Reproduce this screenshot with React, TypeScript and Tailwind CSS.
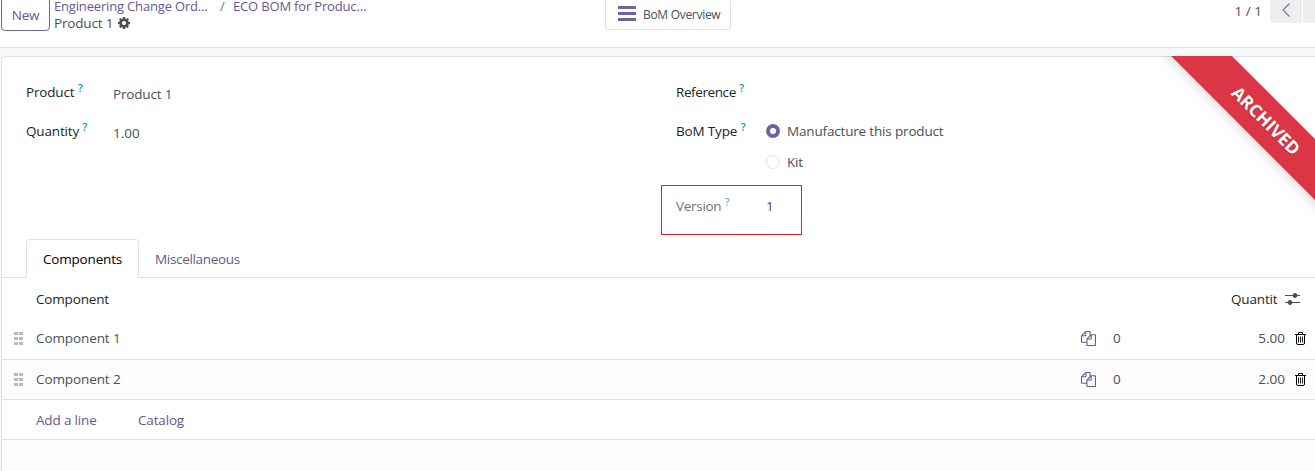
import React from "react";

function CogIcon() {
  return (
    <svg viewBox="0 0 1792 1792" className="size-[14px] fill-[#495057]">
      <path d="M1152 896q0-106-75-181t-181-75-181 75-75 181 75 181 181 75 181-75 75-181zm512-109v222q0 12-8 23t-20 13l-185 28q-19 54-39 91 35 50 107 138 10 12 10 25t-9 23q-27 37-99 108t-94 71q-12 0-26-9l-138-108q-44 23-91 38-16 136-29 186-7 28-36 28h-222q-14 0-24.5-8.5t-11.5-21.5l-28-184q-49-16-90-37l-141 107q-10 9-25 9-14 0-25-11-126-114-165-168-7-10-7-23 0-12 8-23 15-21 51-66.5t54-70.5q-27-50-41-99l-183-27q-13-2-21-12.5t-8-23.5v-222q0-12 8-23t19-13l186-28q14-46 39-92-40-57-107-138-10-12-10-24 0-10 9-23 26-36 98.5-107.5t94.5-71.5q13 0 26 10l138 107q44-23 91-38 16-136 29-186 7-28 36-28h222q14 0 24.5 8.5t11.5 21.5l28 184q49 16 90 37l142-107q9-9 24-9 13 0 25 10 129 119 165 170 7 8 7 22 0 12-8 23-15 21-51 66.5t-54 70.5q26 50 41 98l183 28q13 2 21 12.5t8 23.5z" />
    </svg>
  );
}

function CopyIcon() {
  return (
    <svg viewBox="0 0 1792 1792" className="size-[15px] shrink-0 fill-[#66598f]">
      <path d="M1696 384q40 0 68 28t28 68v1216q0 40-28 68t-68 28h-960q-40 0-68-28t-28-68v-288h-544q-40 0-68-28t-28-68v-672q0-40 20-88t48-76l408-408q28-28 76-48t88-20h416q40 0 68 28t28 68v328q68-40 128-40h416zm-544 213l-299 299h299v-299zm-640-384l-299 299h299v-299zm196 647l316-316v-416h-384v416q0 40-28 68t-68 28h-416v640h512v-256q0-40 20-88t48-76zm956 804v-1152h-384v416q0 40-28 68t-68 28h-416v640h896z" />
    </svg>
  );
}

function TrashIcon() {
  return (
    <svg viewBox="0 0 11 13" className="h-[13px] w-[11px] shrink-0 fill-none stroke-black">
      <path d="M0 2.5h11M3.5 2.5V.5h4v2M1.5 2.5v8.5q0 1.5 1.5 1.5h5q1.500 0 1.500-1.500V2.500" />
      <path d="M3.500 4.500v6M5.500 4.500v6M7.500 4.500v6" strokeWidth="0.900" />
    </svg>
  );
}

function SlidersIcon() {
  return (
    <svg viewBox="0 0 15 13" className="h-[13px] w-[15px] shrink-0 fill-[#495057] stroke-[#495057]">
      <path d="M0 2.500h15M0 9.500h15" strokeWidth="1.100" />
      <circle cx="10" cy="2.500" r="2" />
      <circle cx="5" cy="9.500" r="2" />
    </svg>
  );
}

function Grip() {
  return (
    <span className="grid w-[9px] shrink-0 grid-cols-2 gap-x-px gap-y-[2px]">
      {[0, 1, 2, 3, 4, 5].map((i) => (
        <span key={i} className="h-[3px] w-[4px] bg-[#b5bbc1]" />
      ))}
    </span>
  );
}

function Label({ text, className }: { text: string; className: string }) {
  return (
    <div className={`flex h-5 shrink-0 items-center leading-5 text-[#212529] ${className}`}>
      <span>{text}</span>
      <sup className="-top-1 ml-[3.500px] text-[10.500px] font-semibold text-[#0f8fb3]">?</sup>
    </div>
  );
}

function Row({ name, qty, className }: { name: string; qty: string; className: string }) {
  return (
    <div className={`flex items-center border-b border-[#dee2e6] pl-3 text-[#495057] ${className}`}>
      <Grip />
      <span className="ml-[13px] w-[1045px] shrink-0 tracking-[-0.1px]">{name}</span>
      <CopyIcon />
      <span className="ml-[17px] w-[20px] shrink-0 tracking-normal">0</span>
      <span className="w-[152px] shrink-0 text-right tracking-normal">{qty}</span>
      <span className="ml-[10px] flex">
        <TrashIcon />
      </span>
    </div>
  );
}

export default function App() {
  return (
    <div className="flex h-[471px] w-[1315px] flex-col overflow-hidden bg-[#f8f9fb] font-['Open_Sans',sans-serif] text-[13.500px] tracking-[-0.17px] text-[#495057]">
      <header className="flex h-12 shrink-0 items-start border-b border-[#dee2e6] bg-white">
        <button className="-mt-1 ml-px flex h-[35px] w-[49px] items-center justify-center rounded border border-[#71639e] pb-px text-[#66598f]">
          <span className="pt-1">New</span>
        </button>
        <div className="ml-1 flex w-[551px] shrink-0 flex-col">
          <div className="flex h-[13px] items-center whitespace-nowrap text-[13px] leading-[13px] text-[#66598f]">
            <span className="w-[166px]">Engineering Change Ord...</span>
            <span className="w-[13px] text-[#6c757d]">/</span>
            <span>ECO BOM for Produc...</span>
          </div>
          <div className="mt-[2px] flex h-4 items-center gap-1 leading-4">
            <span>Product 1</span>
            <CogIcon />
          </div>
        </div>
        <button className="-mt-1 flex h-[34px] w-[126px] shrink-0 items-center rounded border border-[#dee2e6] pl-3 text-[12px] tracking-[-0.3px]">
          <span className="flex w-[18px] flex-col gap-[3px]">
            <span className="h-[3px] bg-[#71639e]" />
            <span className="h-[3px] bg-[#71639e]" />
            <span className="h-[3px] bg-[#71639e]" />
          </span>
          <span className="ml-[7px] whitespace-nowrap pt-[3px]">BoM Overview</span>
        </button>
        <div className="ml-auto flex">
          <span className="mr-[8px] mt-px leading-5 tracking-normal">1 / 1</span>
          <span className="flex h-[23px] w-8 justify-center rounded-bl bg-[#eceef0] pt-[3px]">
            <svg viewBox="0 0 8 14" className="h-[14px] w-2 fill-none stroke-[#777b80]">
              <path d="M7.500 .5L1 7l6.500 6.500" strokeWidth="1.200" />
            </svg>
          </span>
          <span className="ml-px h-[23px] w-3 bg-[#eceef0]" />
        </div>
      </header>

      <main className="relative ml-px mt-2 flex h-[415px] flex-col overflow-hidden rounded-tl border-l border-[#dee2e6] bg-white">
        <div className="absolute left-[1112.500px] top-[41.500px] flex h-[43px] w-[300px] rotate-45 items-center justify-center bg-[#dc3545] pl-[3px] text-[17.500px] font-bold tracking-normal text-white shadow-[0_5px_10px_rgba(0,0,0,0.1)] [text-shadow:0_1px_1px_rgba(0,0,0,0.2)]">
          ARCHIVED
        </div>

        <div className="flex h-[183px] shrink-0 rounded-tl border-t border-[#dee2e6]">
          <div className="flex w-[659px] flex-col pl-6 pt-[25px]">
            <div className="flex h-[39px]">
              <Label text="Product" className="w-[87px]" />
              <span className="mt-[2px] leading-5">Product 1</span>
            </div>
            <div className="flex">
              <Label text="Quantity" className="w-[87px]" />
              <span className="mt-[2px] leading-5 tracking-normal">1.00</span>
            </div>
          </div>
          <div className="flex flex-col pt-[25px]">
            <div className="h-[39px] pl-[15px]">
              <Label text="Reference" className="w-[90px] tracking-[-0.4px]" />
            </div>
            <div className="flex h-[64px] pl-[15px]">
              <Label text="BoM Type" className="w-[90px]" />
              <div className="flex flex-col gap-[11px] leading-5">
                <span className="flex items-center gap-[7px]">
                  <span className="size-[14px] rounded-full border-4 border-[#71639e] bg-white" />
                  Manufacture this product
                </span>
                <span className="flex items-center gap-[7px]">
                  <span className="size-[14px] rounded-full border border-[#dee2e6] bg-white" />
                  Kit
                </span>
              </div>
            </div>
            <div className="flex h-[50px] w-[141px] shrink-0 border border-[#ed1c24] pl-[14px] pt-[10px]">
              <Label text="Version" className="w-[90px] tracking-[-0.3px] opacity-65" />
              <span className="leading-5">1</span>
            </div>
          </div>
        </div>

        <div className="flex h-[39px] shrink-0 items-stretch">
          <span className="w-6 border-b border-[#dee2e6]" />
          <span className="flex w-[113px] items-center justify-center rounded-t border border-b-0 border-[#dee2e6] pt-px text-black">
            Components
          </span>
          <span className="flex flex-1 items-center border-b border-[#dee2e6] pl-4 pt-[2px] tracking-[-0.32px] text-[#66598f]">
            Miscellaneous
          </span>
        </div>

        <div className="flex h-[41px] shrink-0 items-center pl-[34px] pt-[2px] text-[#212529]">
          <span className="w-[1195px]">Component</span>
          <span className="w-[54px]">Quantit</span>
          <SlidersIcon />
        </div>
        <Row name="Component 1" qty="5.00" className="h-[41px] shrink-0 pb-px" />
        <Row name="Component 2" qty="2.00" className="h-10 shrink-0 bg-[#fcfcfc]" />
        <div className="flex h-10 shrink-0 items-center border-b border-[#dee2e6] pl-[34px] pt-[2px] text-[#66598f]">
          <span className="w-[102px]">Add a line</span>
          <span>Catalog</span>
        </div>
        <div className="flex-1 bg-[#fcfcfc]" />
      </main>
    </div>
  );
}
